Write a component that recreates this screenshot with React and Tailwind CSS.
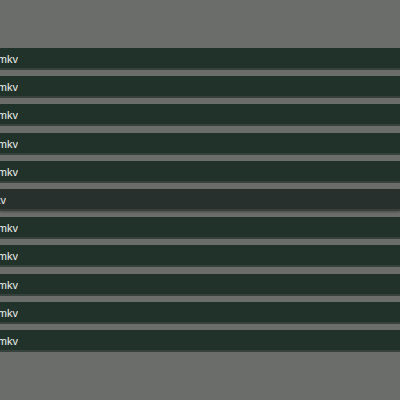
import React from "react";

const rows = Array.from({ length: 11 }, (_, i) => i);

export default function App() {
  return (
    <div
      className="w-[400px] h-[400px] bg-[#6a6d69] pt-[48px] flex flex-col gap-[6.2px] overflow-hidden"
      style={{ fontFamily: '"Liberation Sans", Arial, sans-serif' }}
    >
      {rows.map((i) => {
        const active = i === 5;
        return (
          <div
            key={i}
            className={
              active
                ? "h-[22px] shrink-0 flex items-center bg-[#27302c] shadow-[inset_0_-2px_0_#38413c,0_1px_2px_rgba(0,0,0,0.3)]"
                : "h-[22px] shrink-0 flex items-center bg-[#20322a] shadow-[inset_0_-2px_0_#37423c]"
            }
          >
            <div
              className={
                active
                  ? "w-[6px] shrink-0 overflow-hidden flex justify-end whitespace-nowrap text-[11px] leading-none text-[#eef1ef] pt-[1px]"
                  : "w-[18px] shrink-0 overflow-hidden flex justify-end whitespace-nowrap text-[11px] leading-none text-[#eef1ef] pt-[1px]"
              }
            >
              <span>Episode.{String(i + 1).padStart(2, "0")}.mkv</span>
            </div>
          </div>
        );
      })}
    </div>
  );
}
